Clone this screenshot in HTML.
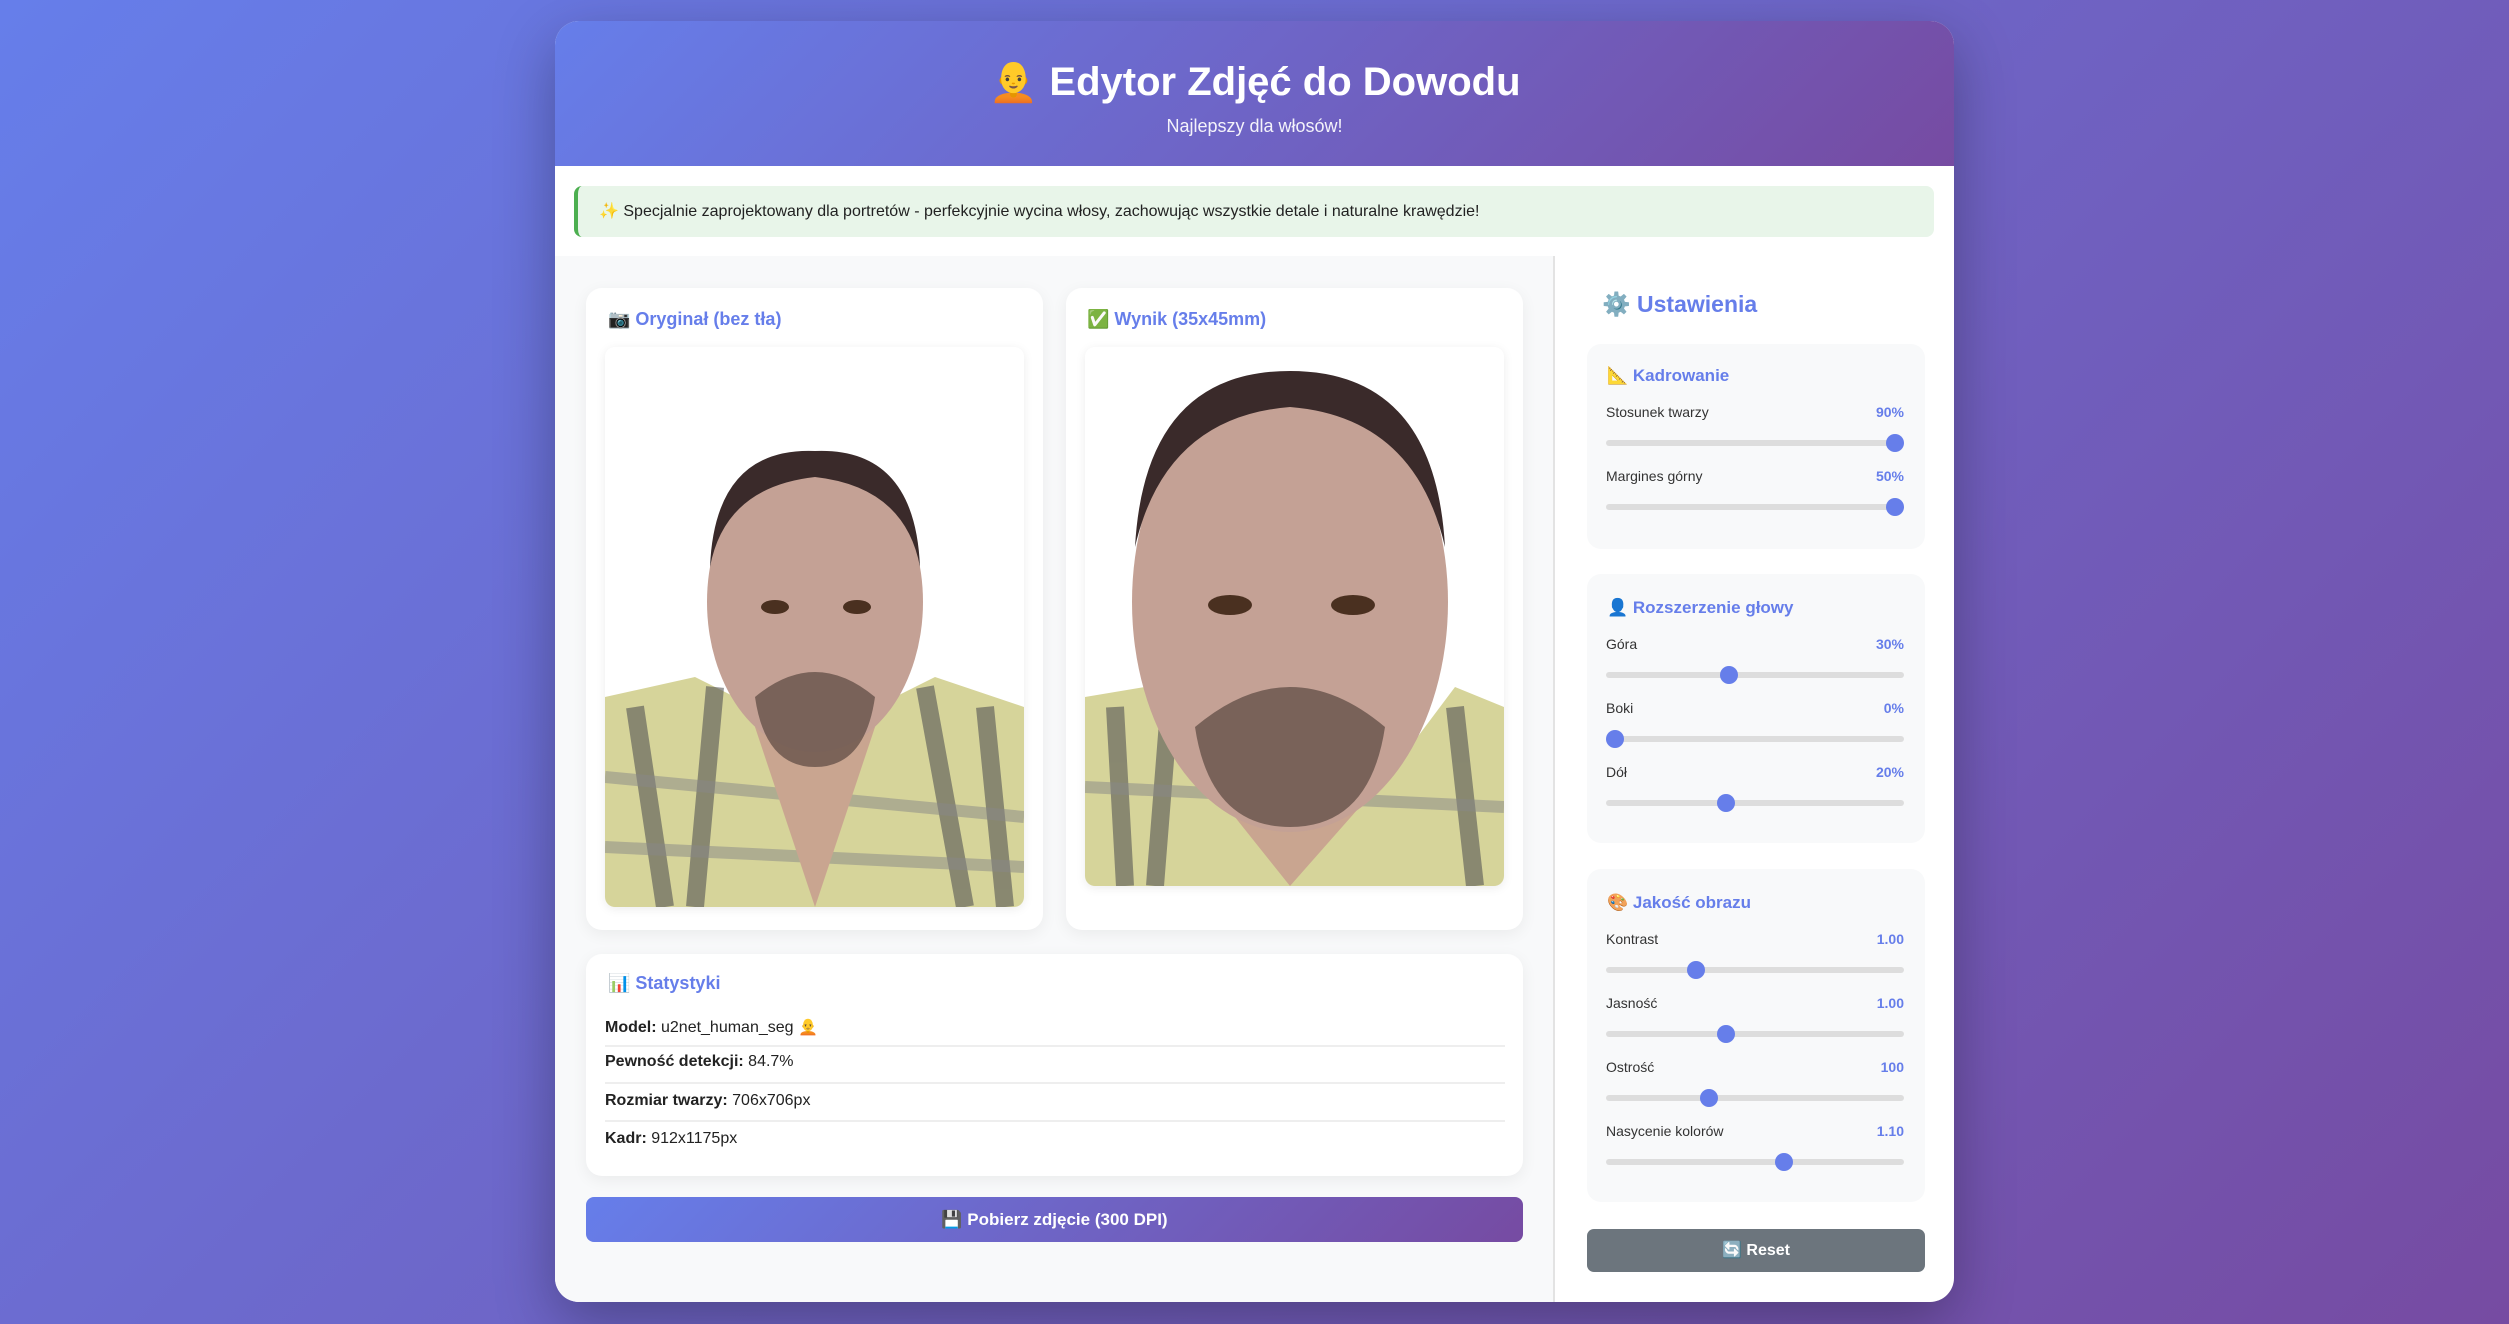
<!DOCTYPE html>
<html><head><meta charset="utf-8"><style>
*{margin:0;padding:0;box-sizing:border-box}
body{width:2509px;height:1324px;background:linear-gradient(135deg,#667eea 0%,#764ba2 100%);font-family:"Liberation Sans","DejaVu Sans",sans-serif;position:relative;overflow:hidden}
.abs{position:absolute}
.cont{left:555px;top:21px;width:1399px;height:1281px;background:#fff;border-radius:24px;overflow:hidden;box-shadow:0 20px 60px rgba(0,0,0,.3)}
.hdr{left:0;top:0;width:1399px;height:145px;background:linear-gradient(135deg,#667eea 0%,#764ba2 100%);color:#fff;text-align:center}
.hdr h1{position:absolute;top:37px;width:100%;font-size:40px;font-weight:bold}
.hdr p{position:absolute;top:95px;width:100%;font-size:18px;opacity:.92}
.info{left:19px;top:165px;width:1360px;height:51px;background:#e8f5e9;border-left:4px solid #4caf50;border-radius:8px;font-size:16px;line-height:51px;padding-left:21px;color:#222}
.left{left:0;top:235px;width:1000px;height:1046px;background:#f8f9fa;border-right:2px solid #e3e3e3}
.card{background:#fff;border-radius:16px;box-shadow:0 4px 16px rgba(0,0,0,.06)}
.ct{font-size:18px;font-weight:bold;color:#667eea}
.grp{left:1032px;width:338px;background:#f8f9fa;border-radius:14px}
.gt{position:absolute;left:20px;font-size:17px;font-weight:bold;color:#667eea}
.lb{position:absolute;left:19px;font-size:14px;color:#333}
.vl{position:absolute;right:21px;font-size:14px;font-weight:bold;color:#667eea}
.tr{position:absolute;left:19px;width:298px;height:6px;border-radius:3px;background:#ddd}
.th{position:absolute;width:18px;height:18px;border-radius:50%;background:#667eea;top:-6px}
.row{position:absolute;left:19px;width:900px;font-size:16px;color:#222}
.sep{position:absolute;left:19px;width:900px;height:2px;background:#eee}
</style></head><body>
<div class="abs cont">
 <div class="abs hdr"><h1>🧑‍🦲 Edytor Zdjęć do Dowodu</h1><p>Najlepszy dla włosów!</p></div>
 <div class="abs info">✨ Specjalnie zaprojektowany dla portretów - perfekcyjnie wycina włosy, zachowując wszystkie detale i naturalne krawędzie!</div>
 <div class="abs left"></div>
 <div class="abs card" style="left:31px;top:267px;width:457px;height:642px"></div>
 <div class="abs ct" style="left:53px;top:288px">📷 Oryginał (bez tła)</div>
 <div class="abs card" style="left:511px;top:267px;width:457px;height:642px"></div>
 <div class="abs ct" style="left:532px;top:288px">✅ Wynik (35x45mm)</div>
 <svg class="abs" style="left:50px;top:326px;border-radius:10px;box-shadow:0 2px 10px rgba(0,0,0,.08)" width="419" height="560" viewBox="0 0 419 560">
  <rect width="419" height="560" fill="#fff"/>
  <path d="M0 350 L90 330 L150 360 L270 360 L330 330 L419 360 L419 560 L0 560Z" fill="#d6d49a"/>
  <path d="M30 360 L60 560 M110 340 L90 560 M320 340 L360 560 M380 360 L400 560" stroke="#555" stroke-width="18" opacity=".6"/>
  <path d="M0 430 L419 470 M0 500 L419 520" stroke="#888" stroke-width="12" opacity=".5"/>
  <path d="M150 380 L210 560 L270 380Z" fill="#c9a590"/>
  <ellipse cx="210" cy="255" rx="108" ry="150" fill="#c4a195"/>
  <path d="M105 220 Q110 100 210 104 Q310 100 315 220 Q300 140 210 130 Q120 140 105 220Z" fill="#3a2a2a"/>
  <path d="M150 350 Q210 300 270 350 Q260 420 210 420 Q160 420 150 350Z" fill="#5a4740" opacity=".7"/>
  <ellipse cx="170" cy="260" rx="14" ry="7" fill="#4a3020"/><ellipse cx="252" cy="260" rx="14" ry="7" fill="#4a3020"/>
 </svg>
 <svg class="abs" style="left:530px;top:326px;border-radius:10px;box-shadow:0 2px 10px rgba(0,0,0,.08)" width="419" height="539" viewBox="0 0 419 539">
  <rect width="419" height="539" fill="#fff"/>
  <path d="M0 350 L60 340 L110 420 L310 420 L370 340 L419 360 L419 539 L0 539Z" fill="#d6d49a"/>
  <path d="M30 360 L40 539 M85 350 L70 539 M370 360 L390 539" stroke="#555" stroke-width="18" opacity=".6"/>
  <path d="M0 440 L419 460" stroke="#888" stroke-width="12" opacity=".5"/>
  <path d="M110 420 L205 539 L310 420Z" fill="#c9a590"/>
  <ellipse cx="205" cy="255" rx="158" ry="230" fill="#c4a195"/>
  <path d="M50 200 Q60 24 205 24 Q350 24 360 200 Q330 70 205 60 Q80 70 50 200Z" fill="#3a2a2a"/>
  <path d="M110 380 Q205 300 300 380 Q285 480 205 480 Q125 480 110 380Z" fill="#5a4740" opacity=".7"/>
  <ellipse cx="145" cy="258" rx="22" ry="10" fill="#4a3020"/><ellipse cx="268" cy="258" rx="22" ry="10" fill="#4a3020"/>
 </svg>
 <div class="abs card" style="left:31px;top:933px;width:937px;height:222px">
  <div class="abs ct" style="left:22px;top:19px">📊 Statystyki</div>
  <div class="row" style="top:63px"><b>Model:</b> u2net_human_seg 🧑‍🦲</div>
  <div class="sep" style="top:91px"></div>
  <div class="row" style="top:99px"><b>Pewność detekcji:</b> 84.7%</div>
  <div class="sep" style="top:128px"></div>
  <div class="row" style="top:138px"><b>Rozmiar twarzy:</b> 706x706px</div>
  <div class="sep" style="top:166px"></div>
  <div class="row" style="top:176px"><b>Kadr:</b> 912x1175px</div>
 </div>
 <div class="abs" style="left:31px;top:1176px;width:937px;height:45px;border-radius:8px;background:linear-gradient(135deg,#667eea,#764ba2);color:#fff;font-weight:bold;font-size:17px;text-align:center;line-height:45px">💾 Pobierz zdjęcie (300 DPI)</div>
 <div class="abs" style="left:1047px;top:270px;font-size:23px;font-weight:bold;color:#667eea">⚙️ Ustawienia</div>
 <div class="abs grp" style="top:323px;height:205px">
  <div class="gt" style="top:22px">📐 Kadrowanie</div>
  <div class="lb" style="top:60px">Stosunek twarzy</div><div class="vl" style="top:60px">90%</div>
  <div class="tr" style="top:96px"><div class="th" style="left:280px"></div></div>
  <div class="lb" style="top:124px">Margines górny</div><div class="vl" style="top:124px">50%</div>
  <div class="tr" style="top:160px"><div class="th" style="left:280px"></div></div>
 </div>
 <div class="abs grp" style="top:553px;height:269px">
  <div class="gt" style="top:24px">👤 Rozszerzenie głowy</div>
  <div class="lb" style="top:62px">Góra</div><div class="vl" style="top:62px">30%</div>
  <div class="tr" style="top:98px"><div class="th" style="left:114px"></div></div>
  <div class="lb" style="top:126px">Boki</div><div class="vl" style="top:126px">0%</div>
  <div class="tr" style="top:162px"><div class="th" style="left:0px"></div></div>
  <div class="lb" style="top:190px">Dół</div><div class="vl" style="top:190px">20%</div>
  <div class="tr" style="top:226px"><div class="th" style="left:111px"></div></div>
 </div>
 <div class="abs grp" style="top:848px;height:333px">
  <div class="gt" style="top:24px">🎨 Jakość obrazu</div>
  <div class="lb" style="top:62px">Kontrast</div><div class="vl" style="top:62px">1.00</div>
  <div class="tr" style="top:98px"><div class="th" style="left:81px"></div></div>
  <div class="lb" style="top:126px">Jasność</div><div class="vl" style="top:126px">1.00</div>
  <div class="tr" style="top:162px"><div class="th" style="left:111px"></div></div>
  <div class="lb" style="top:190px">Ostrość</div><div class="vl" style="top:190px">100</div>
  <div class="tr" style="top:226px"><div class="th" style="left:94px"></div></div>
  <div class="lb" style="top:254px">Nasycenie kolorów</div><div class="vl" style="top:254px">1.10</div>
  <div class="tr" style="top:290px"><div class="th" style="left:169px"></div></div>
 </div>
 <div class="abs" style="left:1032px;top:1208px;width:338px;height:43px;border-radius:7px;background:#6c757d;color:#fff;font-weight:bold;font-size:16px;text-align:center;line-height:43px">🔄 Reset</div>
</div>
</body></html>
